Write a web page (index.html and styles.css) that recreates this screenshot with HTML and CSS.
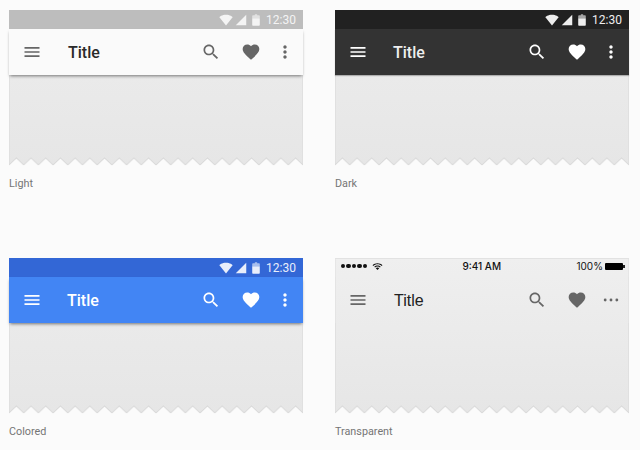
FILE: index.html
```html
<!DOCTYPE html>
<html>
<head>
    <meta charset="utf-8">
    <title>App bar variants</title>
    <link rel="stylesheet" href="styles.css">
</head>
<body>
    <svg class="defs" width="0" height="0">
        <symbol id="i-menu" viewBox="0 0 24 24"><path d="M3 18h18v-2H3v2zm0-5h18v-2H3v2zm0-7v2h18V6H3z"/></symbol>
        <symbol id="i-search" viewBox="0 0 24 24"><path d="M15.5 14h-.79l-.28-.27C15.41 12.59 16 11.11 16 9.5 16 5.91 13.09 3 9.5 3S3 5.91 3 9.5 5.91 16 9.5 16c1.61 0 3.09-.59 4.23-1.57l.27.28v.79l5 4.99L20.49 19l-4.99-5zm-6 0C7.01 14 5 11.99 5 9.5S7.01 5 9.5 5 14 7.01 14 9.5 11.99 14 9.5 14z"/></symbol>
        <symbol id="i-heart" viewBox="0 0 24 24"><path d="M12 21.35l-1.45-1.32C5.4 15.36 2 12.28 2 8.5 2 5.42 4.42 3 7.5 3c1.74 0 3.41.81 4.5 2.09C13.09 3.81 14.76 3 16.5 3 19.58 3 22 5.42 22 8.5c0 3.78-3.4 6.86-8.55 11.54L12 21.35z"/></symbol>
        <symbol id="i-dots" viewBox="0 0 24 24"><path d="M12 8c1.1 0 2-.9 2-2s-.9-2-2-2-2 .9-2 2 .9 2 2 2zm0 2c-1.1 0-2 .9-2 2s.9 2 2 2 2-.9 2-2-.9-2-2-2zm0 6c-1.1 0-2 .9-2 2s.9 2 2 2 2-.9 2-2-.9-2-2-2z"/></symbol>
        <symbol id="i-more" viewBox="0 0 24 24"><circle cx="5" cy="12" r="1.7"/><circle cx="12" cy="12" r="1.7"/><circle cx="19" cy="12" r="1.7"/></symbol>
        <symbol id="i-wifi" viewBox="0 0 24 24"><path d="M12.01 21.49L23.64 7c-.45-.34-4.93-4-11.64-4C5.28 3 .81 6.66.37 7l11.63 14.49z"/></symbol>
        <symbol id="i-signal" viewBox="0 0 24 24"><path d="M3 21h18V3z"/></symbol>
        <symbol id="i-battery" viewBox="0 0 24 24"><path fill-opacity=".65" d="M18.5 5.3c0-.7-.6-1.3-1.3-1.3H14V2h-4v2H6.800c-.7 0-1.300.6-1.300 1.300V9h13z"/><path d="M5.500 9v11.700c0 .7.6 1.300 1.300 1.300h10.400c.7 0 1.300-.6 1.300-1.300V9z"/></symbol>
        <symbol id="i-ios-wifi" viewBox="0 0 12 9"><path d="M6 1C3.900 1 2 1.800.6 3.100l.8.8C2.600 2.800 4.200 2.100 6 2.100s3.400.7 4.600 1.800l.8-.8C10 1.800 8.100 1 6 1zm0 2.300c-1.400 0-2.600.5-3.500 1.400l.8.8C4 4.800 5 4.400 6 4.400s2 .4 2.700 1.100l.8-.8C8.600 3.800 7.400 3.300 6 3.300zm0 2.300c-.8 0-1.400.3-1.900.8L6 8.300l1.900-1.900c-.5-.5-1.100-.8-1.900-.8z"/></symbol>
        <symbol id="i-torn" viewBox="0 0 294 9" preserveAspectRatio="none">
            <defs>
                <pattern id="teeth" width="14.7" height="9" patternUnits="userSpaceOnUse">
                    <path class="tooth" d="M0 8L7.350 1 14.700 8V9H0z"/>
                    <path class="tooth-edge" d="M0 8L7.350 1 14.700 8"/>
                </pattern>
            </defs>
            <rect width="294" height="9" fill="url(#teeth)"/>
        </symbol>
    </svg>

    <main class="grid">
        <section class="sample">
            <div class="frame light">
                <div class="status">
                    <svg class="st-icon"><use href="#i-wifi"/></svg>
                    <svg class="st-icon"><use href="#i-signal"/></svg>
                    <svg class="st-icon"><use href="#i-battery"/></svg>
                    <span class="time">12:30</span>
                </div>
                <div class="bar">
                    <svg class="icon"><use href="#i-menu"/></svg>
                    <span class="title">Title</span>
                    <svg class="icon"><use href="#i-search"/></svg>
                    <svg class="icon"><use href="#i-heart"/></svg>
                    <svg class="icon"><use href="#i-dots"/></svg>
                </div>
                <div class="content"><svg class="torn"><use href="#i-torn"/></svg></div>
            </div>
            <p class="label">Light</p>
        </section>

        <section class="sample">
            <div class="frame dark">
                <div class="status">
                    <svg class="st-icon"><use href="#i-wifi"/></svg>
                    <svg class="st-icon"><use href="#i-signal"/></svg>
                    <svg class="st-icon"><use href="#i-battery"/></svg>
                    <span class="time">12:30</span>
                </div>
                <div class="bar">
                    <svg class="icon"><use href="#i-menu"/></svg>
                    <span class="title">Title</span>
                    <svg class="icon"><use href="#i-search"/></svg>
                    <svg class="icon"><use href="#i-heart"/></svg>
                    <svg class="icon"><use href="#i-dots"/></svg>
                </div>
                <div class="content"><svg class="torn"><use href="#i-torn"/></svg></div>
            </div>
            <p class="label">Dark</p>
        </section>

        <section class="sample">
            <div class="frame colored">
                <div class="status">
                    <svg class="st-icon"><use href="#i-wifi"/></svg>
                    <svg class="st-icon"><use href="#i-signal"/></svg>
                    <svg class="st-icon"><use href="#i-battery"/></svg>
                    <span class="time">12:30</span>
                </div>
                <div class="bar">
                    <svg class="icon"><use href="#i-menu"/></svg>
                    <span class="title">Title</span>
                    <svg class="icon"><use href="#i-search"/></svg>
                    <svg class="icon"><use href="#i-heart"/></svg>
                    <svg class="icon"><use href="#i-dots"/></svg>
                </div>
                <div class="content"><svg class="torn"><use href="#i-torn"/></svg></div>
            </div>
            <p class="label">Colored</p>
        </section>

        <section class="sample">
            <div class="frame clear">
                <div class="status ios">
                    <div class="ios-left">
                        <span class="ios-dots"><i></i><i></i><i></i><i></i><i></i></span>
                        <svg class="ios-wifi"><use href="#i-ios-wifi"/></svg>
                    </div>
                    <span class="ios-time">9:41 AM</span>
                    <div class="ios-right">
                        <span>100%</span>
                        <span class="ios-battery"></span>
                    </div>
                </div>
                <div class="bar">
                    <svg class="icon"><use href="#i-menu"/></svg>
                    <span class="title">Title</span>
                    <svg class="icon"><use href="#i-search"/></svg>
                    <svg class="icon"><use href="#i-heart"/></svg>
                    <svg class="icon"><use href="#i-more"/></svg>
                </div>
                <div class="content"><svg class="torn"><use href="#i-torn"/></svg></div>
            </div>
            <p class="label">Transparent</p>
        </section>
    </main>
</body>
</html>
```

FILE: styles.css
```css
body {
    margin: 0;
    background: #fbfbfb;
    font-family: Roboto, sans-serif;
}
.defs {
    display: block;
    height: 0;
}
.grid {
    display: grid;
    grid-template-columns: 294px 294px;
    column-gap: 32px;
    row-gap: 68px;
    padding: 10px 0 0 9px;
}
.label {
    margin: 12px 0 0;
    font-size: 10.8px;
    line-height: 12px;
    color: #757575;
}
.frame {
    display: flex;
    flex-direction: column;
    height: 156px;
}
.status {
    display: flex;
    align-items: center;
    justify-content: flex-end;
    height: 19px;
    padding-right: 7px;
    gap: 1px;
}
.st-icon {
    width: 14px;
    height: 14px;
    fill: currentColor;
}
.time {
    margin-left: 2px;
    font-size: 12px;
}
.bar {
    position: relative;
    z-index: 1;
    display: flex;
    align-items: center;
    height: 46px;
    padding: 0 8px 0 13px;
    box-shadow: 0 2px 3px -1px rgba(0, 0, 0, .5);
}
.icon {
    width: 20px;
    height: 20px;
    fill: currentColor;
    margin-left: 20px;
}
.bar .icon:first-child {
    margin-left: 0;
}
.bar .icon:last-child {
    margin-left: 14px;
}
.title {
    flex: 1;
    margin-left: 26px;
    font-size: 16px;
    font-weight: 500;
    line-height: 20px;
    padding-top: 1px;
}
.content {
    flex: 1;
    display: flex;
    flex-direction: column;
    justify-content: flex-end;
    background: linear-gradient(#eaeaea, #e6e6e6);
    box-shadow: inset 1px 0 #e0e0e0, inset -1px 0 #e0e0e0;
}
.torn {
    display: block;
    width: 294px;
    height: 9px;
}
.tooth {
    fill: #fbfbfb;
}
.tooth-edge {
    fill: none;
    stroke: #d8d8d8;
}

/* variants */
.light .status {
    background: #bdbdbd;
    color: #f4f4f4;
}
.light .bar {
    background: #fafafa;
    color: #666;
}
.light .title {
    color: #2a2a2a;
}
.dark .status {
    background: #212121;
    color: #eee;
}
.dark .bar {
    background: #333;
    color: #fff;
    box-shadow: 0 1px 1px rgba(0, 0, 0, .25);
}
.dark .title {
    margin-left: 25px;
    color: #eee;
}
.colored .status {
    background: #3367d6;
    color: #e8eefb;
}
.colored .bar {
    background: #4285f4;
    color: #fff;
}
.colored .title {
    margin-left: 25px;
}
.clear {
    background: linear-gradient(#efefef, #e6e6e6);
}
.clear .status,
.clear .bar,
.clear .content {
    background: transparent;
}
.clear .status {
    justify-content: space-between;
    padding: 0 4px 3px 6px;
    box-sizing: border-box;
    color: #111;
    font-family: Inter, sans-serif;
    font-size: 10px;
    box-shadow: inset 0 1px #e2e2e2, inset 1px 0 #e6e6e6, inset -1px 0 #e6e6e6;
}
.clear .bar {
    color: #666;
    box-shadow: inset 1px 0 #e4e4e4, inset -1px 0 #e4e4e4;
}
.clear .title {
    color: #212121;
    font-family: "Liberation Sans", sans-serif;
    font-weight: 400;
}
.ios-left,
.ios-right {
    display: flex;
    align-items: center;
    gap: 5px;
}
.ios-right {
    gap: 2px;
}
.ios-dots {
    display: flex;
    gap: 1px;
}
.ios-dots i {
    width: 4.400px;
    height: 4.400px;
    border-radius: 50%;
    background: #111;
}
.ios-wifi {
    width: 11px;
    height: 9px;
    fill: #111;
}
.ios-time {
    font-weight: 500;
    margin-left: 4px;
}
.ios-battery {
    position: relative;
    width: 18px;
    height: 7px;
    background: #000;
    border-radius: 1px;
    margin-right: 2px;
}
.ios-battery::after {
    content: "";
    position: absolute;
    top: 2px;
    right: -2px;
    width: 1.500px;
    height: 3px;
    background: #222;
}
```
